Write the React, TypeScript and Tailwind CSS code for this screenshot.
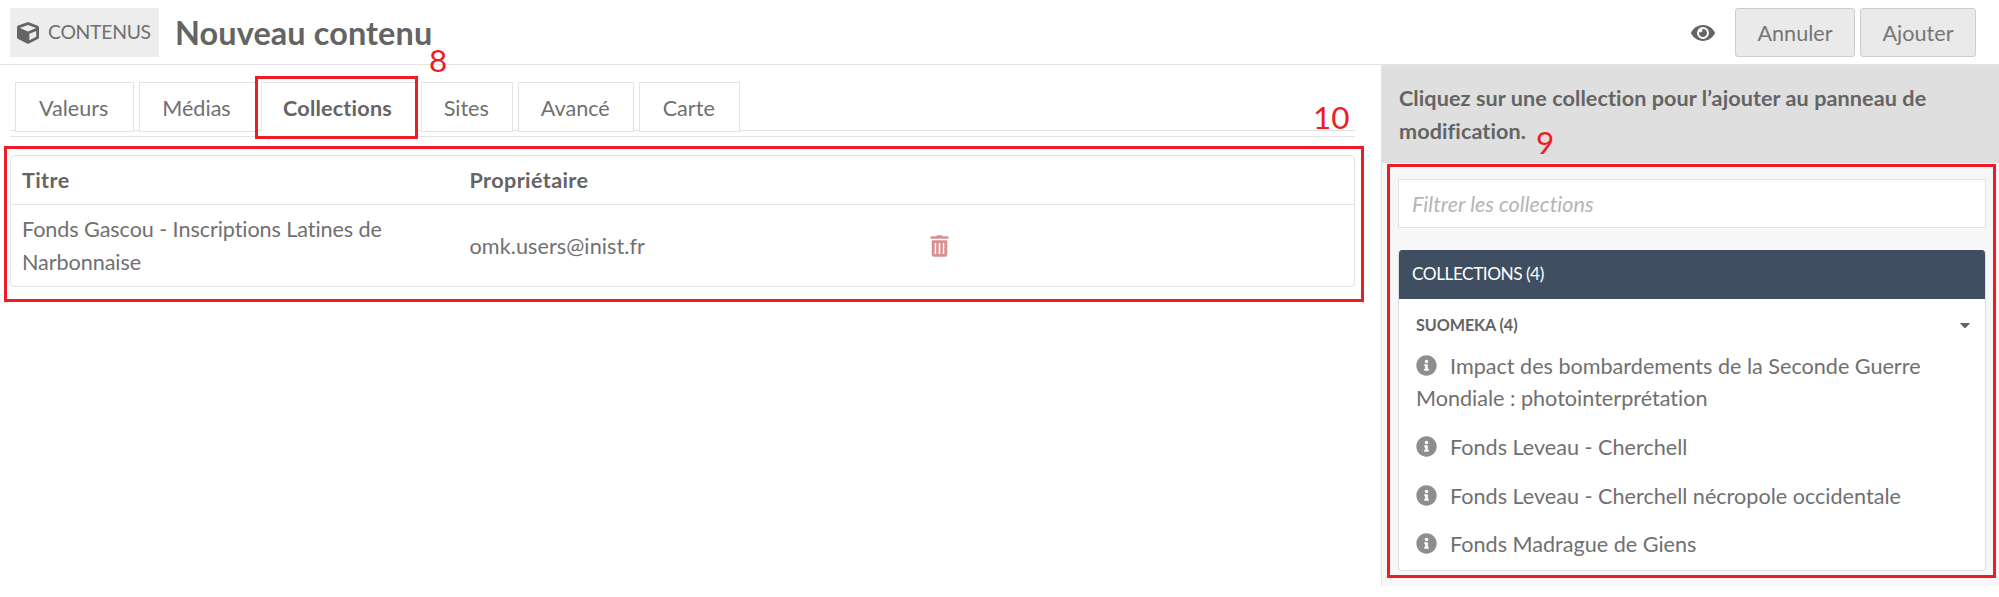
import { FaCaretDown, FaCube, FaEye, FaInfoCircle } from "react-icons/fa";

const tabs = [
  { label: "Valeurs", box: "w-[118.5px]" },
  { label: "Médias", box: "w-[117px]" },
  { label: "Collections", box: "w-[155px]", active: true },
  { label: "Sites", box: "w-[92.5px]" },
  { label: "Avancé", box: "w-[115.5px]" },
  { label: "Carte", box: "w-[101.5px]" },
];

const collections = [
  { name: "Impact des bombardements de la Seconde Guerre Mondiale : photointerprétation" },
  { name: "Fonds Leveau - Cherchell" },
  { name: "Fonds Leveau - Cherchell nécropole occidentale" },
  { name: "Fonds Madrague de Giens" },
];

function TrashIcon() {
  return (
    <svg viewBox="0 0 19 22" className="h-[22px] w-[19px] shrink-0" fill="#d99090">
      <path d="M6 1.3 7 .3h5l1 1h4.7a.8.8 0 0 1 .8.8v1.7H.5V2.100a.8.8 0 0 1 .8-.8z" />
      <path
        fillRule="evenodd"
        d="M1.700 5.300h15.600v14.400a2 2 0 0 1-2 2H3.700a2 2 0 0 1-2-2zM4.700 8v11h1.500V8zM8.700 8v11h1.600V8zM12.800 8v11h1.500V8z"
      />
    </svg>
  );
}

function Header() {
  return (
    <header className="flex h-[65px] items-start border-b border-[#e3e3e3] pt-2 pr-[23px] pl-[10px]">
      <div className="flex h-[49px] w-[149px] shrink-0 items-center gap-[9px] bg-[#ededed] pl-[7px]">
        <FaCube className="size-[22px] shrink-0" />
        <span className="text-[19.4px] tracking-[-0.3px] whitespace-nowrap text-[#707070]">CONTENUS</span>
      </div>
      <h1 className="ml-[16px] text-[32.4px] leading-[49px] font-bold tracking-[0.12px] whitespace-nowrap">Nouveau contenu</h1>
      <div className="ml-auto flex h-[49px] items-center">
        <FaEye className="mr-[20px] size-[24px]" />
        <button className="mr-[5px] h-[49px] w-[120px] rounded-[3px] border border-[#cdcdcd] bg-[#eaeaea] pt-[2px] text-[#767676]">Annuler</button>
        <button className="h-[49px] w-[116px] rounded-[3px] border border-[#cdcdcd] bg-[#eaeaea] pt-[2px] text-[#767676]">Ajouter</button>
      </div>
    </header>
  );
}

function Tabs() {
  return (
    <nav className="h-[72px] border-b border-[#e3e3e3] pt-[17px]">
      <div className="flex h-[49px] gap-[5px] border-b border-[#e3e3e3] pl-[5px]">
        {tabs.map((tab) => (
          <div
            key={tab.label}
            className={`flex h-[50px] shrink-0 items-center justify-center border bg-white pt-[3px] pr-px ${tab.box} ${
              tab.active ? "border-[#e3e3e3] border-b-white font-bold tracking-[0.2px]" : "border-[#e3e3e3] text-[#707070]"
            }`}
          >
            {tab.label}
          </div>
        ))}
      </div>
    </nav>
  );
}

function SelectedCollections() {
  return (
    <div className="mt-[18px] rounded-[4px] border border-[#e3e3e3]">
      <div className="flex h-[49px] items-center border-b border-[#e3e3e3] pl-[11px] font-bold tracking-[0.38px]">
        <div className="w-[447.5px]">Titre</div>
        <div>Propriétaire</div>
      </div>
      <div className="flex h-[81px] items-center pl-[11px] text-[#707070]">
        <div className="w-[447.5px] pr-10 tracking-[-0.08px]">Fonds Gascou - Inscriptions Latines de Narbonnaise</div>
        <div className="w-[460.5px] pt-px tracking-[0.08px]">omk.users@inist.fr</div>
        <TrashIcon />
      </div>
    </div>
  );
}

function Sidebar() {
  return (
    <aside className="h-[521px] w-[618px] border-l border-[#e3e3e3] bg-[#f7f7f7]">
      <h2 className="h-[98px] bg-[#dfdfdf] px-[17px] pt-[17px] leading-[33px] font-bold tracking-[0.08px]">
        Cliquez sur une collection pour l’ajouter au panneau de modification.
      </h2>
      <div className="pr-[13px] pl-[16px]">
        <input
          className="mt-[16px] block h-[49px] w-full border border-[#e3e3e3] bg-white px-[13px] italic placeholder:text-[#b5b5b5]"
          placeholder="Filtrer les collections"
        />
        <div className="mt-[22px] h-[321px] overflow-hidden rounded-[4px] border border-t-0 border-[#dfdfdf] bg-white">
          <div className="-mx-px flex h-[49px] items-center bg-[#404e61] pl-[14px] text-[17.3px] tracking-[-0.5px] text-white">COLLECTIONS (4)</div>
          <div className="flex h-[52px] items-center justify-between pr-[12px] pl-[17px] text-[16.2px] font-bold tracking-[-0.1px]">
            <span>SUOMEKA (4)</span>
            <FaCaretDown className="size-[16px]" />
          </div>
          <ul className="-mt-px pr-[30px] pl-[17px] text-[#707070]">
            {collections.map(({ name }) => (
              <li key={name} className="pb-[16.2px]">
                <FaInfoCircle className="mr-[13px] inline-block size-[21px] align-[-2px] text-[#8e8e8e]" />
                {name}
              </li>
            ))}
          </ul>
        </div>
      </div>
    </aside>
  );
}

function Annotations() {
  return (
    <div className="pointer-events-none text-[31.5px] leading-[32px] text-[#ee1c25]">
      <div className="absolute top-[76px] left-[255px] h-[63px] w-[163px] border-[3px] border-[#ee1c25]" />
      <div className="absolute top-[146px] left-[4px] h-[156px] w-[1360px] border-[3px] border-[#ee1c25]" />
      <div className="absolute top-[164px] left-[1387px] h-[414px] w-[609px] border-[3px] border-[#ee1c25]" />
      <span className="absolute top-[44px] left-[429px]">8</span>
      <span className="absolute top-[101px] left-[1313px]">10</span>
      <span className="absolute top-[126px] left-[1536px]">9</span>
    </div>
  );
}

export default function App() {
  return (
    <div className="relative h-[597px] w-[1999px] overflow-hidden bg-white font-['Lato',sans-serif] text-[21.6px] leading-[32.4px] text-[#646464] [font-variant-ligatures:none]">
      <Header />
      <div className="flex items-start justify-between">
        <main className="ml-[10px] w-[1345px]">
          <Tabs />
          <SelectedCollections />
        </main>
        <Sidebar />
      </div>
      <Annotations />
    </div>
  );
}
